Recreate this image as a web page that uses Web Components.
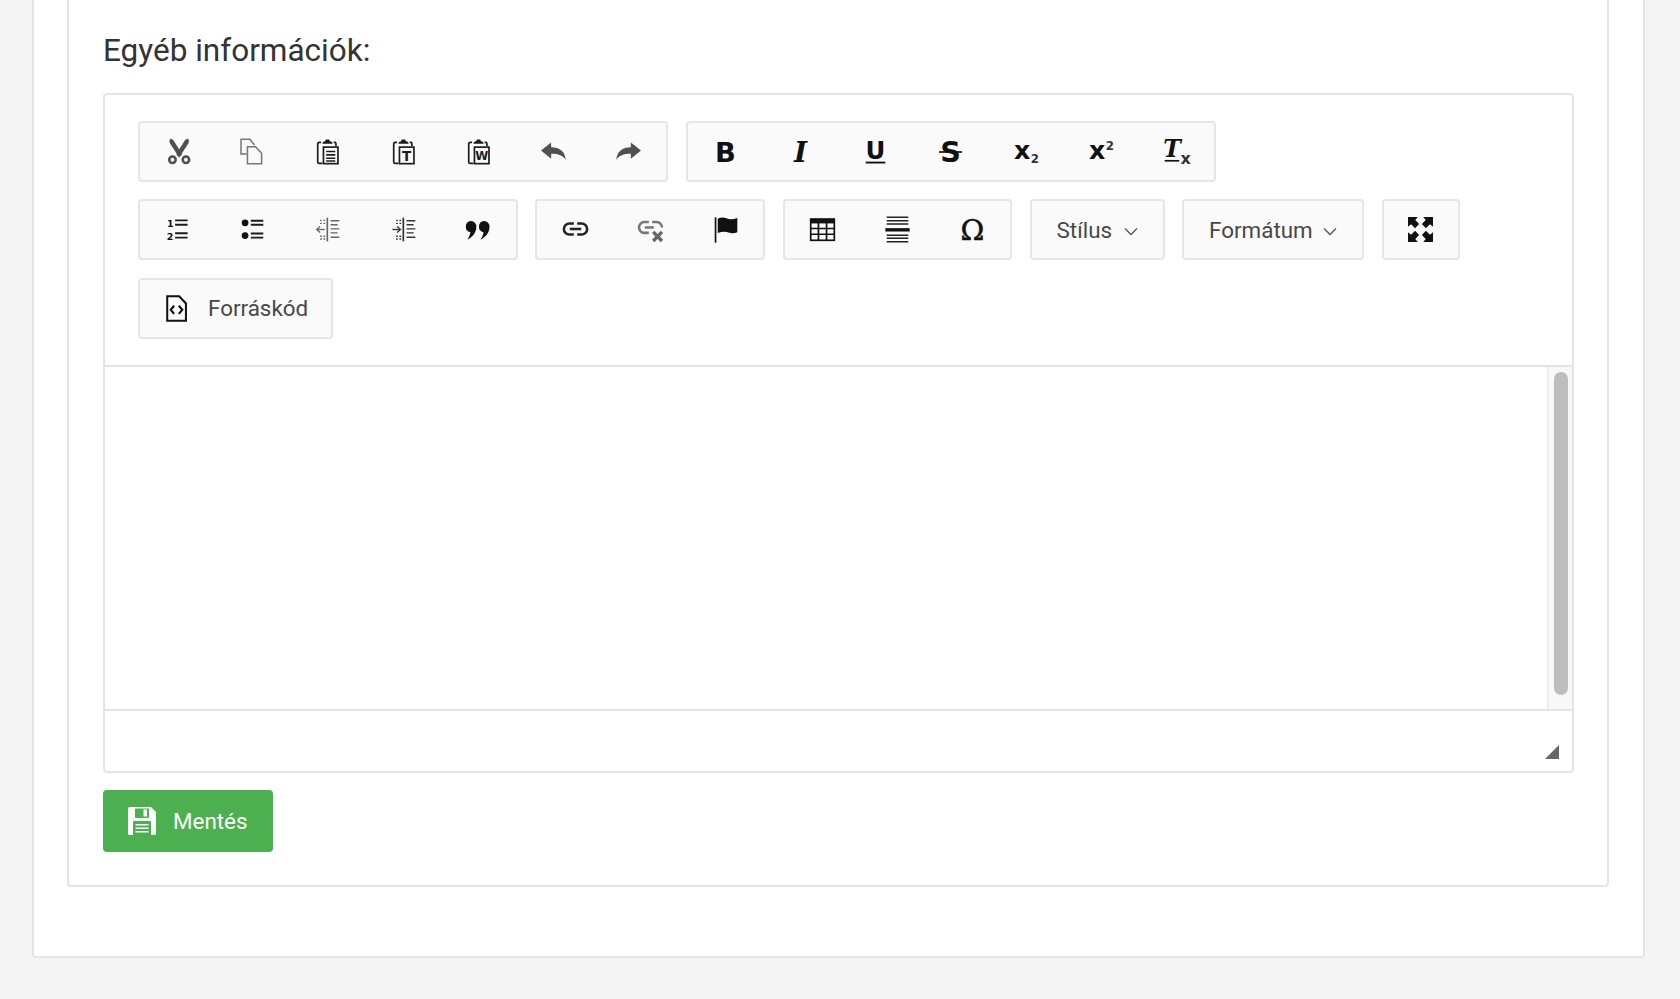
<!DOCTYPE html>
<html lang="hu">
<head>
<meta charset="utf-8">
<title>Egyéb információk</title>
<style>
	html, body { margin: 0; padding: 0; background: #f4f4f4; }
	body { font-family: Roboto, "Liberation Sans", sans-serif; height: 999px; overflow: hidden; }
</style>
</head>
<body>
<info-page>
	<info-panel>
		<h2 slot="title">Egyéb információk:</h2>
		<rich-editor>
			<ck-row slot="toolbar">
				<ck-group>
					<ck-button icon="cut"></ck-button><ck-button icon="copy"></ck-button><ck-button icon="paste"></ck-button><ck-button icon="pastetext"></ck-button><ck-button icon="pasteword"></ck-button><ck-button icon="undo"></ck-button><ck-button icon="redo"></ck-button>
				</ck-group>
				<ck-group>
					<ck-button icon="bold"></ck-button><ck-button icon="italic"></ck-button><ck-button icon="underline"></ck-button><ck-button icon="strike"></ck-button><ck-button icon="sub"></ck-button><ck-button icon="sup"></ck-button><ck-button icon="clear"></ck-button>
				</ck-group>
			</ck-row>
			<ck-row slot="toolbar">
				<ck-group>
					<ck-button icon="numlist"></ck-button><ck-button icon="bullist"></ck-button><ck-button icon="outdent"></ck-button><ck-button icon="indent"></ck-button><ck-button icon="quote"></ck-button>
				</ck-group>
				<ck-group>
					<ck-button icon="link"></ck-button><ck-button icon="unlink"></ck-button><ck-button icon="anchor"></ck-button>
				</ck-group>
				<ck-group>
					<ck-button icon="table"></ck-button><ck-button icon="rule"></ck-button><ck-button icon="omega"></ck-button>
				</ck-group>
				<ck-combo style="width:135px">Stílus</ck-combo>
				<ck-combo style="width:182px">Formátum</ck-combo>
				<ck-group>
					<ck-button icon="maximize" style="width:74px"></ck-button>
				</ck-group>
			</ck-row>
			<ck-row slot="toolbar">
				<ck-group>
					<ck-button icon="source" wide>Forráskód</ck-button>
				</ck-group>
			</ck-row>
		</rich-editor>
		<save-button>Mentés</save-button>
	</info-panel>
</info-page>

<script>
const CLIP = `<g fill="none" stroke="#1c1c1c" stroke-width="1"><path d="M4.2 2.6H3.2Q2.2 2.6 2.2 3.6V14Q2.2 15 3.2 15H5"/><path d="M11.6 2.6H12.6Q13 2.6 13 3.6V4.8"/><rect x="5.6" y="5.4" width="8.6" height="9.8"/></g><path d="M5 3.4Q5 1.9 6.6 1.9L7 .9H9L9.4 1.9Q11 1.9 11 3.4Z" fill="#1c1c1c"/>`;
const QUOTE = 'M4.2 3A3.2 3.2 0 0 1 7.5 6.6C7.5 9.8 5 12.6 2.2 14C3.2 12.6 3.8 11 4 9.7A3.4 3.4 0 0 1 4.2 3Z';
const ICONS = {
	cut: `<g transform="translate(1 0)"><path fill="#4f4f4f" d="M2.6 .4Q4 .4 4.6 1.4L9.8 9.6 8 11.6 2.4 3Q2 1.6 2.6 .4ZM13.4 .4Q14 1.6 13.6 3L8 11.6 6.2 9.6 11.4 1.4Q12 .4 13.4 .4Z"/><g fill="none" stroke="#4f4f4f" stroke-width="1.5"><circle cx="4" cy="12.9" r="1.9"/><circle cx="12" cy="12.9" r="1.9"/></g></g>`,
	copy: `<g transform="translate(-.8 0)" fill="none" stroke="#777" stroke-width=".9"><path d="M5.4 9.5H2V.8H7.2L10 4.2"/><path d="M5.8 5.2H10.6L14.2 9V15.2H5.8Z"/></g>`,
	paste: CLIP + `<path d="M7.2 8H12.6M7.2 10H12.6M7.2 12H12.6M7.2 13.6H12.6" stroke="#1c1c1c" stroke-width=".9" fill="none"/>`,
	pastetext: CLIP + `<text x="9.9" y="13.4" text-anchor="middle" font-family="DejaVu Sans" font-weight="700" font-size="8" fill="#1c1c1c">T</text>`,
	pasteword: CLIP + `<text x="9.9" y="13.2" text-anchor="middle" font-family="DejaVu Sans" font-weight="700" font-size="7" fill="#1c1c1c">W</text>`,
	undo: `<path fill="#505050" d="M.6 7.4 6.6 2.6V5.5C11.6 5.5 15 8.2 15.2 13C13.6 10.4 11 9.4 6.6 9.4V12.3Z"/>`,
	redo: `<path fill="#505050" d="M15.4 7.4 9.4 2.6V5.5C4.4 5.5 1 8.2 .8 13C2.4 10.4 5 9.4 9.4 9.4V12.3Z"/>`,
	bold: `<text x="8" y="14.2" text-anchor="middle" font-family="DejaVu Sans" font-weight="700" font-size="16.2" fill="#111">B</text>`,
	italic: `<text x="8" y="14.2" text-anchor="middle" font-family="DejaVu Serif" font-style="italic" font-weight="700" font-size="16.5" fill="#111">I</text>`,
	underline: `<text x="8" y="12.4" text-anchor="middle" font-family="DejaVu Sans" font-weight="700" font-size="14.5" fill="#111">U</text><rect x="2.2" y="14" width="11.6" height="1.1" fill="#111"/>`,
	strike: `<text x="8" y="14.4" text-anchor="middle" font-family="DejaVu Sans" font-weight="700" font-size="17" fill="#111">S</text><rect x="1.2" y="7.8" width="13.6" height="1" fill="#111"/>`,
	sub: `<text x="5.4" y="12.2" text-anchor="middle" font-family="DejaVu Sans" font-weight="700" font-size="15" fill="#111">x</text><text x="13" y="15" text-anchor="middle" font-family="DejaVu Sans" font-weight="700" font-size="7" fill="#333">2</text>`,
	sup: `<text x="5.4" y="12.6" text-anchor="middle" font-family="DejaVu Sans" font-weight="700" font-size="15" fill="#111">x</text><text x="13" y="7" text-anchor="middle" font-family="DejaVu Sans" font-weight="700" font-size="7" fill="#333">2</text>`,
	clear: `<text x="5.4" y="11.4" text-anchor="middle" font-family="DejaVu Serif" font-style="italic" font-weight="700" font-size="14" fill="#111">T</text><rect x="1" y="13" width="8.6" height="1" fill="#111"/><text x="13.4" y="15.4" text-anchor="middle" font-family="DejaVu Sans" font-weight="700" font-size="9.5" fill="#333">x</text>`,
	numlist: `<text x="3.8" y="6.4" text-anchor="middle" font-family="DejaVu Sans" font-weight="700" font-size="5.6" fill="#111">1</text><text x="3.6" y="14.2" text-anchor="middle" font-family="DejaVu Sans" font-weight="700" font-size="5.6" fill="#111">2</text><path d="M6.6 2.6H14M6.6 5.2H14M6.6 10.2H14M6.6 12.8H14" stroke="#1c1c1c" stroke-width="1.1" fill="none"/>`,
	bullist: `<circle cx="3.6" cy="4" r="2" fill="#111"/><circle cx="3.6" cy="11.6" r="2" fill="#111"/><path d="M7 2.8H14.4M7 5.2H14.4M7 10.4H14.4M7 12.8H14.4" stroke="#1c1c1c" stroke-width="1.1" fill="none"/>`,
	outdent: `<g fill="none" stroke="#666" stroke-width=".8"><path d="M7.9 1V15" stroke-width="1"/><path d="M9.8 2.8H15M9.8 5.2H14M9.8 7.6H15M9.8 10H14M9.8 12.6H15"/><path d="M2 8H6.4"/><path d="M3.6 6.2 1.6 8 3.6 9.8"/><path d="M3.6 2.6H6.6M3.6 4.4H6.6M3.6 12H6.6M3.6 13.6H6.6" stroke-dasharray="1 1"/></g>`,
	indent: `<g fill="none" stroke="#333" stroke-width=".8"><path d="M7.9 1V15" stroke-width="1"/><path d="M9.8 2.8H15M9.8 5.2H14M9.8 7.6H15M9.8 10H14M9.8 12.6H15"/><path d="M1.4 8H5.8"/><path d="M4.2 6.2 6.2 8 4.2 9.8"/><path d="M3.6 2.6H6.6M3.6 4.4H6.6M3.6 12H6.6M3.6 13.6H6.6" stroke-dasharray="1 1"/></g>`,
	quote: `<g fill="#111"><path transform="translate(-.8 0)" d="${QUOTE}"/><path transform="translate(7 0)" d="${QUOTE}"/></g>`,
	link: `<g fill="none" stroke="#222" stroke-width="1.5"><path d="M7 4.4H4.4A3.3 3.3 0 0 0 4.4 11H7"/><path d="M9 4.4H11.6A3.3 3.3 0 0 1 11.6 11H9"/><path d="M4.6 7.7H11.4"/></g>`,
	unlink: `<g fill="none" stroke="#777" stroke-width="1.5"><path d="M7 3.6H4.4A3.2 3.2 0 0 0 4.4 10H7"/><path d="M9 3.6H11.6A3.2 3.2 0 0 1 14.8 6.8"/><path d="M4.6 6.8H10"/></g><path d="M9.6 9.4 14.8 14.8M14.8 9.4 9.6 14.8" stroke="#666" stroke-width="2"/>`,
	anchor: `<rect x="1.6" y=".8" width="1" height="15" fill="#111"/><path fill="#111" d="M3.4 1.6Q6 .2 8.6 1.4T15 1.2V9.6Q12.4 10.8 9.8 9.8T3.4 10Z"/>`,
	table: `<path fill="#111" d="M.6 1.4H15.4V4.4H.6Z"/><g fill="none" stroke="#111" stroke-width="1"><rect x="1" y="2" width="14" height="12.4"/><path d="M1 7.4H15M1 10.8H15M5.6 4V14.4M10.4 4V14.4"/></g>`,
	rule: `<path d="M1.6 .8H14.4M1.6 2.8H14.4M1.6 4.8H14.4M1.6 11.4H14.4M1.6 13.2H14.4M1.6 15.2H14.4" stroke="#222" stroke-width=".9" fill="none"/><rect x=".8" y="7.2" width="14.4" height="2" fill="#111"/>`,
	omega: `<text x="8" y="14.4" text-anchor="middle" font-family="DejaVu Serif" font-size="17" stroke="#111" stroke-width=".3" fill="#111">Ω</text>`,
	maximize: `<path fill="#111" d="M.6 .6H6.4L4.9 2.4 7.2 4.8 4.8 7.2 2.4 4.9.6 6.4ZM15.4 .6V6.4L13.6 4.9 11.2 7.2 8.8 4.8 11.1 2.4 9.6 .6ZM.6 15.4V9.6L2.4 11.1 4.8 8.8 7.2 11.2 4.9 13.6 6.4 15.4ZM15.4 15.4H9.6L11.1 13.6 8.8 11.2 11.2 8.8 13.6 11.1 15.4 9.6Z"/>`,
	source: `<path fill="none" stroke="#111" stroke-width="1.2" d="M2.5 .8H9.6L13.6 5V15.2H2.5Z"/><path fill="none" stroke="#111" stroke-width="1.3" d="M6.6 6.4 4.6 8.8 6.6 11.2M9.4 6.4 11.4 8.8 9.4 11.2"/>`
};

// toolbar button, the icon comes from the table above
class CkButton extends HTMLElement {
	constructor() {
		super();
		this.attachShadow({ mode: 'open' });
	}

	connectedCallback() {
		const icon = ICONS[this.getAttribute('icon')] || '';
		this.shadowRoot.innerHTML = `
			<style>
				:host {
					display: flex;
					align-items: center;
					justify-content: center;
					width: 75.2px;
					height: 100%;
					box-sizing: border-box;
					font-size: 22.4px;
					color: #484848;
				}
				:host([wide]) {
					justify-content: flex-start;
					gap: 18px;
					width: 191px;
					padding-left: 23px;
				}
				svg {
					width: 27px;
					height: 27px;
					display: block;
					flex-shrink: 0;
					overflow: visible;
				}
			</style>
			<svg viewBox="0 0 16 16">${icon}</svg><slot></slot>
		`;
	}
}

class CkGroup extends HTMLElement {
	constructor() {
		super();
		this.attachShadow({ mode: 'open' });
		this.shadowRoot.innerHTML = `
			<style>
				:host {
					display: flex;
					height: 61px;
					box-sizing: border-box;
					border: 2px solid #e6e6e6;
					border-radius: 4px;
					background: #fafafa;
				}
			</style>
			<slot></slot>
		`;
	}
}

class CkCombo extends HTMLElement {
	constructor() {
		super();
		this.attachShadow({ mode: 'open' });
		this.shadowRoot.innerHTML = `
			<style>
				:host {
					display: flex;
					align-items: center;
					justify-content: space-between;
					height: 61px;
					box-sizing: border-box;
					padding: 0 25px;
					border: 2px solid #e6e6e6;
					border-radius: 4px;
					background: #fafafa;
					font-size: 22.4px;
					color: #484848;
				}
				svg {
					width: 14px;
					height: 9px;
					margin-top: 3px;
				}
			</style>
			<slot></slot>
			<svg viewBox="0 0 14 9"><path d="M1 1.5 7 7.5 13 1.5" fill="none" stroke="#555" stroke-width="1.3"/></svg>
		`;
	}
}

class CkRow extends HTMLElement {
	constructor() {
		super();
		this.attachShadow({ mode: 'open' });
		this.shadowRoot.innerHTML = `
			<style>
				:host {
					display: flex;
					gap: 17.5px;
				}
			</style>
			<slot></slot>
		`;
	}
}

class RichEditor extends HTMLElement {
	constructor() {
		super();
		this.attachShadow({ mode: 'open' });
		this.shadowRoot.innerHTML = `
			<style>
				:host {
					display: block;
					box-sizing: border-box;
					height: 680px;
					border: 2px solid #e4e4e4;
					border-radius: 4px;
					background: #fff;
				}
				.toolbar {
					display: flex;
					flex-direction: column;
					gap: 17.5px;
					box-sizing: border-box;
					height: 272px;
					padding: 25.5px 33px 0;
					border-bottom: 2px solid #e4e4e4;
				}
				.body {
					display: flex;
					height: 342px;
				}
				.area {
					flex: 1;
				}
				.scrollbar {
					display: flex;
					justify-content: center;
					width: 25px;
					box-sizing: border-box;
					padding: 5px 0 14px;
					background: #f8f8f8;
					border-left: 2px solid #ececec;
				}
				.thumb {
					width: 14px;
					border-radius: 7px;
					background: #bdbdbd;
				}
				.status {
					display: flex;
					justify-content: flex-end;
					align-items: flex-end;
					box-sizing: border-box;
					height: 62px;
					padding: 0 13px 12px 0;
					border-top: 2px solid #e4e4e4;
				}
				.grip {
					width: 0;
					height: 0;
					border-style: solid;
					border-width: 0 0 14px 14px;
					border-color: transparent transparent #666 transparent;
				}
			</style>
			<div class="toolbar"><slot name="toolbar"></slot></div>
			<div class="body">
				<div class="area"></div>
				<div class="scrollbar"><div class="thumb"></div></div>
			</div>
			<div class="status"><div class="grip"></div></div>
		`;
	}
}

class SaveButton extends HTMLElement {
	constructor() {
		super();
		this.attachShadow({ mode: 'open' });
		this.shadowRoot.innerHTML = `
			<style>
				:host {
					display: inline-flex;
					align-items: center;
					gap: 17px;
					box-sizing: border-box;
					width: 170px;
					height: 62px;
					margin-top: 17px;
					padding-left: 25px;
					border-radius: 4px;
					background: #4caf50;
					color: #fff;
					font-size: 22.4px;
				}
				svg {
					width: 28px;
					height: 28px;
				}
			</style>
			<svg viewBox="0 0 28 28"><path fill="#fff" fill-rule="evenodd" d="M1.5 0H23L28 5V26.5Q28 28 26.5 28H1.5Q0 28 0 26.5V1.5Q0 0 1.5 0ZM7 1.5V10Q7 11 8 11H20Q21 11 21 10V1.5ZM5 15V28H23V15Q23 14 22 14H6Q5 14 5 15Z"/><path fill="#fff" d="M15.5 2.5H19V9.5H15.5ZM7.5 17H20.5V18.6H7.5ZM7.5 20.5H20.5V22.1H7.5ZM7.5 24H20.5V25.6H7.5Z"/></svg>
			<slot></slot>
		`;
	}
}

class InfoPanel extends HTMLElement {
	constructor() {
		super();
		this.attachShadow({ mode: 'open' });
		this.shadowRoot.innerHTML = `
			<style>
				:host {
					display: block;
					box-sizing: border-box;
					height: 887px;
					padding: 0 33px 0 34px;
					background: #fff;
					border: 2px solid #e4e4e4;
					border-top: 0;
					border-radius: 0 0 4px 4px;
				}
				::slotted(h2) {
					margin: 0;
					height: 93px;
					box-sizing: border-box;
					padding-top: 31px;
					font-size: 31.5px;
					line-height: 40px;
					font-weight: 400;
					color: #333;
				}
			</style>
			<slot name="title"></slot>
			<slot></slot>
		`;
	}
}

class InfoPage extends HTMLElement {
	constructor() {
		super();
		this.attachShadow({ mode: 'open' });
		this.shadowRoot.innerHTML = `
			<style>
				:host {
					display: block;
					box-sizing: border-box;
					width: 1613px;
					height: 958px;
					margin-left: 32px;
					padding: 0 34px 0 33px;
					background: #fff;
					border: 2px solid #e4e4e4;
					border-top: 0;
					border-radius: 0 0 4px 4px;
				}
			</style>
			<slot></slot>
		`;
	}
}

customElements.define('ck-button', CkButton);
customElements.define('ck-group', CkGroup);
customElements.define('ck-combo', CkCombo);
customElements.define('ck-row', CkRow);
customElements.define('rich-editor', RichEditor);
customElements.define('save-button', SaveButton);
customElements.define('info-panel', InfoPanel);
customElements.define('info-page', InfoPage);
</script>
</body>
</html>
